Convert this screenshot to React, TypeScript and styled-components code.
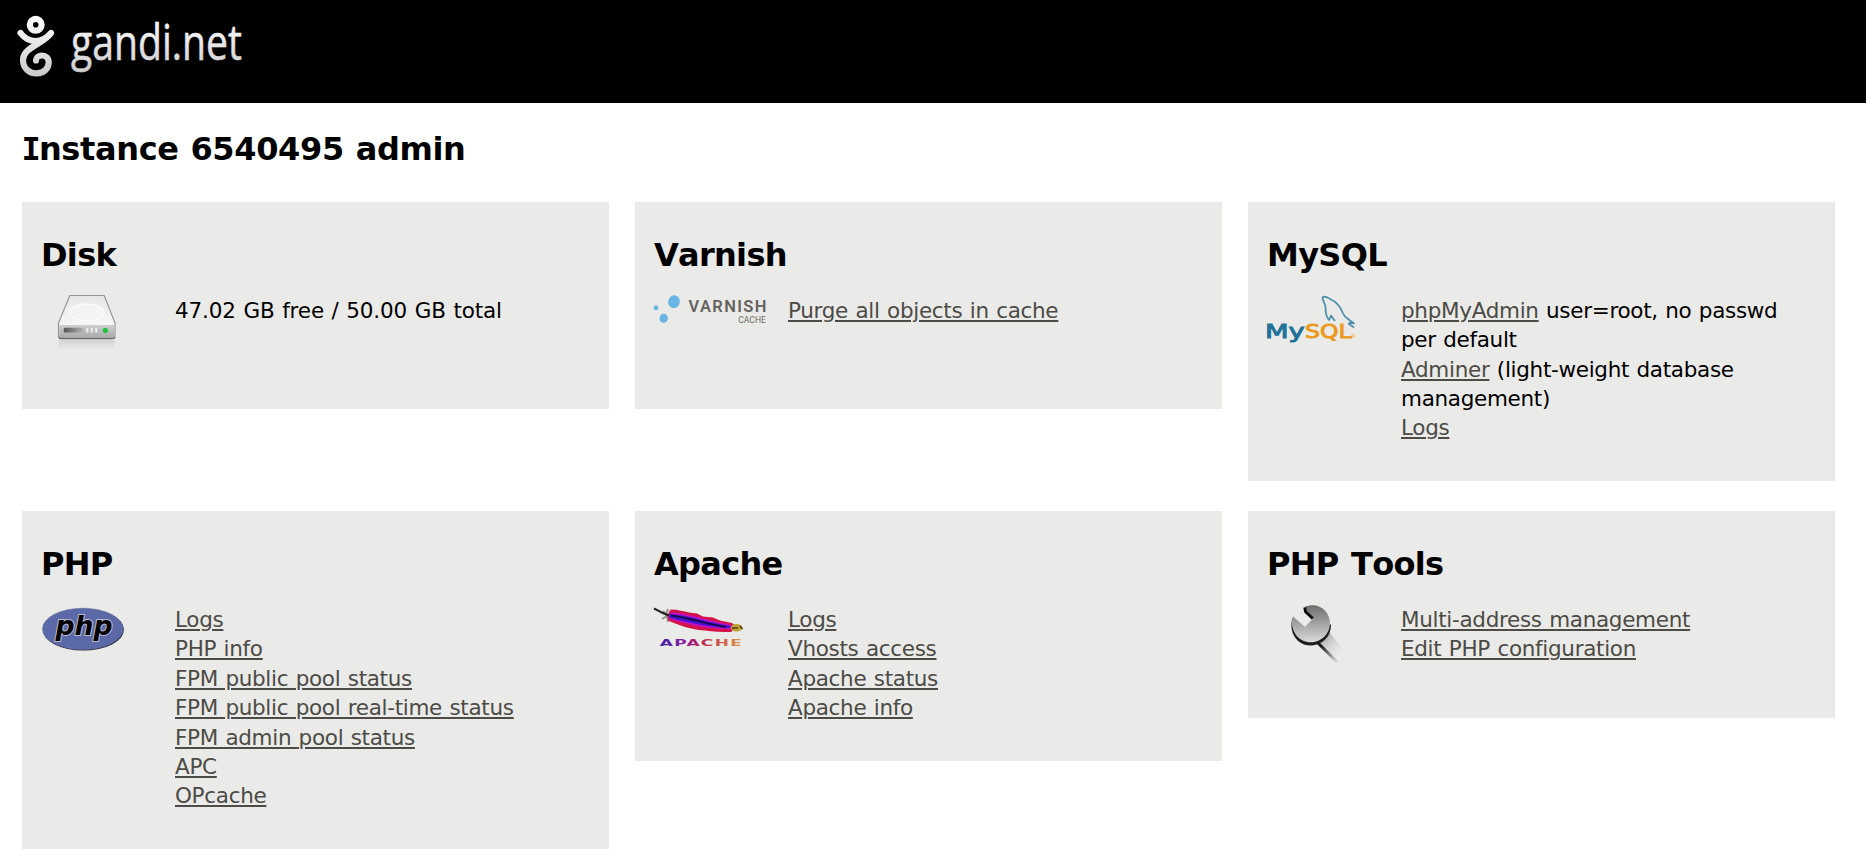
import React from 'react';
import styled, { createGlobalStyle } from 'styled-components';

const GlobalStyle = createGlobalStyle`
  body {
    margin: 0;
    background: #fff;
    color: #000;
    font-family: Verdana, "DejaVu Sans", sans-serif;
    font-size: 21.5px;
    line-height: 29.37px;
  }
`;

const Header = styled.header`
  height: 103px;
  background: #000;
`;

const Logo = styled.svg`
  display: block;
`;

const PageTitle = styled.h1`
  margin: 0;
  padding: 26px 23px 33px;
  font-size: 32px;
  line-height: 40px;
  letter-spacing: -0.35px;
  word-spacing: 1px;
`;

const SlabLetter = styled.span`
  font-family: "DejaVu Sans Mono", monospace;
  margin: 0 -1.5px;
`;

const Grid = styled.main`
  display: grid;
  grid-template-columns: repeat(3, 587px);
  column-gap: 26px;
  row-gap: 30px;
  align-items: start;
  padding: 0 22px 16px;
`;

const Card = styled.section`
  box-sizing: border-box;
  min-height: 207px;
  padding: 33px 19px 38.4px;
  background: #eaeae8;
`;

const CardTitle = styled.h2`
  margin: 0 0 20.9px;
  font-size: 32px;
  line-height: 40px;
  letter-spacing: -0.7px;
  word-spacing: 2px;
  font-kerning: none;
`;

const CardBody = styled.div`
  display: flex;
`;

const Icon = styled.svg`
  flex: none;
  width: 134px;
  height: 70px;
  margin: -4px 0 -30px;
  overflow: visible;
`;

const List = styled.ul<{ $tracking?: string }>`
  margin: 0;
  padding: 0;
  list-style: none;
  white-space: nowrap;
  word-spacing: 0.9px;
  letter-spacing: ${(p) => p.$tracking ?? '-0.31px'};
`;

const Link = styled.a`
  color: #4c4b45;
  text-decoration: underline;
  text-decoration-thickness: 2px;
  text-underline-offset: 2px;
`;

const DiskIcon = () => (
  <Icon viewBox="41 292 134 70">
    <defs>
      <linearGradient id="dTop" x1="0" y1="0" x2="0" y2="1">
        <stop offset="0" stopColor="#e6e6e6" /><stop offset="1" stopColor="#fff" />
      </linearGradient>
      <linearGradient id="dFront" x1="0" y1="0" x2="0" y2="1">
        <stop offset="0" stopColor="#cfcfcf" /><stop offset="1" stopColor="#a8a8a8" />
      </linearGradient>
      <linearGradient id="dSlot"><stop offset="0" stopColor="#555" /><stop offset="1" stopColor="#b5b5b5" /></linearGradient>
      <linearGradient id="dRef" x1="0" y1="0" x2="0" y2="1">
        <stop offset="0" stopColor="#c4c4c4" /><stop offset="1" stopColor="#eaeae8" />
      </linearGradient>
    </defs>
    <path d="M58.5 340H115V350H58.5Z" fill="url(#dRef)" opacity=".6" />
    <path d="M69.8 295.5H104.2L115 323V336Q115 338.5 112.5 338.5H61Q58.5 338.5 58.5 336V323Z" fill="url(#dTop)" stroke="#969696" strokeWidth="1.2" />
    <path d="M59.2 325H114.4V336Q114.4 338 112.5 338H61Q59.2 338 59.2 336Z" fill="url(#dFront)" />
    <path d="M59 337Q59.5 338.7 61 338.7H112.5Q114.5 338.7 114.7 337" fill="none" stroke="#686868" strokeWidth="1.3" />
    <ellipse cx="86.7" cy="312.3" rx="17.5" ry="8.5" fill="#f4f4f4" stroke="#fff" strokeWidth="1" />
    <rect x="63.7" y="327.7" width="20" height="4.8" rx="1.5" fill="url(#dSlot)" />
    <path d="M87.3 328V332.5M91.8 328V332.5M96.3 328V332.5" stroke="#eee" strokeWidth="2" />
    <circle cx="105.3" cy="330.3" r="2.6" fill="#1fc43c" />
  </Icon>
);

const VarnishIcon = () => (
  <Icon viewBox="654 292 134 70">
    <g fill="#69b5e3">
      <ellipse cx="674" cy="301.7" rx="5.8" ry="6.4" transform="rotate(15 674 301.7)" />
      <ellipse cx="656" cy="307.7" rx="2.3" ry="2.5" />
      <ellipse cx="663.7" cy="318.3" rx="4.2" ry="4.5" />
    </g>
    <text x="688.5" y="311.8" fontFamily="Roboto, sans-serif" fontSize="16.5" fontWeight="600" fill="#65625f" textLength="78" lengthAdjust="spacing">VARNISH</text>
    <text x="738.3" y="323.3" fontFamily="Roboto, sans-serif" fontSize="8.8" fill="#6d6b69" textLength="27.5" lengthAdjust="spacingAndGlyphs">CACHE</text>
  </Icon>
);

const MySQLIcon = () => (
  <Icon viewBox="1267 292 134 70">
    <g fontFamily="DejaVu Sans, sans-serif" fontSize="19" strokeWidth="0.9">
      <text x="1265" y="338.3" fill="#1f7399" stroke="#1f7399" textLength="39.8" lengthAdjust="spacingAndGlyphs">My</text>
      <text x="1305" y="338.3" fill="#ec9a1c" stroke="#ec9a1c" textLength="46.5" lengthAdjust="spacingAndGlyphs">SQL</text>
    </g>
    <circle cx="1353.3" cy="335.8" r="1.5" fill="none" stroke="#efb35c" />
    <path d="M1322.5 297C1325 295.5 1327.5 297.5 1331 299.5C1338 302.5 1341 308 1343 313.5C1344.5 317 1347 318 1350 320.5L1354 323.5C1351 322.5 1348.5 322.5 1349 324L1354 327.5M1322.5 297C1322.5 301 1325 303 1325.5 307C1325.5 312 1326 317 1329 320L1331 315.5L1335 321" fill="none" stroke="#4a8eab" strokeWidth="1.7" strokeLinejoin="round" />
  </Icon>
);

const PhpIcon = () => (
  <Icon viewBox="41 601 134 70">
    <ellipse cx="83.3" cy="629.6" rx="40.6" ry="21" fill="#20243d" />
    <ellipse cx="82.8" cy="628.9" rx="40.3" ry="20.7" fill="#5b69a8" stroke="#7079a3" strokeWidth="0.6" />
    <text x="55.5" y="634.5" fontFamily="DejaVu Sans, sans-serif" fontSize="26" fontWeight="700" fontStyle="italic" fill="#000" stroke="#b9bbcf" strokeWidth="2" paintOrder="stroke" textLength="57" lengthAdjust="spacingAndGlyphs">php</text>
  </Icon>
);

const ApacheIcon = () => (
  <Icon viewBox="654 601 134 70">
    <defs>
      <linearGradient id="aText" gradientUnits="userSpaceOnUse" x1="660" y1="0" x2="742" y2="0">
        <stop offset="0" stopColor="#3b22a8" /><stop offset=".3" stopColor="#8a1fa0" /><stop offset=".5" stopColor="#bd1f50" /><stop offset="1" stopColor="#dc9a4c" />
      </linearGradient>
    </defs>
    <path d="M663 611L666 614.5L668 609M662 619L667 616L668 622" fill="none" stroke="#8f9489" strokeWidth="2" />
    <path d="M671 609.5C678 609.5 684 611.5 689 612.5L697 613.5L703 616.5L713 617.5L720 620.5L732 623L737 627L731 632C721 632 713 631.5 705 630.5C696 630 690 628 685 627C678 624.5 672 622.5 668 620.5C667 615 669 611 671 609.5Z" fill="#d3124a" />
    <path d="M670 612.5C686 612.5 706 620 733 625.5L730 629.5C706 629 686 624 668.5 618.5Z" fill="#c40fc4" />
    <path d="M669.5 614C688 615 708 622.5 731 626L729 628C706 627 686 622 669 617.5Z" fill="#4513d6" />
    <path d="M671 615.5C690 618 708 624.5 726 627" fill="none" stroke="#140b48" strokeWidth="1.8" />
    <path d="M654 608.3C658 610.5 662 613.5 669 615.5" fill="none" stroke="#1b1e1b" strokeWidth="2" />
    <ellipse cx="736.5" cy="627.8" rx="5.8" ry="3.7" fill="#c3a034" />
    <path d="M732 628H738M740 626L742.5 629" stroke="#4b3b14" strokeWidth="1.5" />
    <text x="659.7" y="645.8" fontFamily="DejaVu Sans, sans-serif" fontSize="9" fontWeight="700" fill="url(#aText)" textLength="83.5" lengthAdjust="spacingAndGlyphs" letterSpacing="0.7">APACHE</text>
  </Icon>
);

const WrenchIcon = () => (
  <Icon viewBox="1267 601 134 70">
    <defs>
      <linearGradient id="wHead" x1="0" y1="0" x2="0" y2="1"><stop offset="0" stopColor="#6d6d6d" /><stop offset="1" stopColor="#dadada" /></linearGradient>
      <linearGradient id="wArm" gradientUnits="userSpaceOnUse" x1="1322" y1="646" x2="1338" y2="663"><stop offset="0" stopColor="#1a1a1a" /><stop offset="1" stopColor="#333" stopOpacity="0" /></linearGradient>
      <linearGradient id="wShine" gradientUnits="userSpaceOnUse" x1="1325" y1="638" x2="1343" y2="659"><stop offset="0" stopColor="#b4b4b4" /><stop offset="1" stopColor="#f2f2f2" stopOpacity="0" /></linearGradient>
    </defs>
    <path d="M1329 632L1349 656L1340 663L1318 642Z" fill="url(#wShine)" />
    <path d="M1317 642L1338 663" stroke="url(#wArm)" strokeWidth="3" />
    <path d="M1292.5 618C1288 633 1298 646 1311 645.5C1322 645 1331 637 1331 625L1328 622L1300 630Z" fill="#1d1d1d" />
    <path d="M1293 616.5L1305 627L1313 618.5L1304.3 607C1318 601 1330 611 1330 623C1330 635 1320 642.3 1311 642.3C1299 642.3 1291 632 1292 620Z" fill="url(#wHead)" />
    <path d="M1304.8 607.5L1305.5 611.5L1312.7 618.5" fill="none" stroke="#0b0b0b" strokeWidth="3" />
  </Icon>
);

const LinkItems = ({ items }: { items: string[] }) => (
  <List>
    {items.map((label) => (
      <li key={label}><Link>{label}</Link></li>
    ))}
  </List>
);

const App = () => (
  <>
    <GlobalStyle />
    <Header>
      <Logo width="340" height="103" viewBox="0 0 340 103">
        <defs>
          <linearGradient id="silver" gradientUnits="userSpaceOnUse" x1="0" y1="16" x2="0" y2="76">
            <stop offset="0" stopColor="#fff" /><stop offset="1" stopColor="#cacaca" />
          </linearGradient>
        </defs>
        <circle cx="35.7" cy="24.8" r="5.9" fill="none" stroke="url(#silver)" strokeWidth="6.2" />
        <path d="M20.5 33C25 39 30 41 35.5 41C41 41 46 39 51 33C44 44 23 47 23 60C23 68 29 73.3 36.5 73.3C44 73.3 48.7 68.5 48.7 62.5C48.7 58 45.5 55.5 42 55.5C38.5 55.5 36 57.5 36 60.5" fill="none" stroke="url(#silver)" strokeWidth="6.2" strokeLinecap="round" strokeLinejoin="round" />
        <text x="71" y="60" fontFamily="Open Sans, sans-serif" fontSize="50" fontWeight="500" fill="url(#silver)" stroke="url(#silver)" strokeWidth="0.5" textLength="171" lengthAdjust="spacingAndGlyphs">gandi.net</text>
      </Logo>
    </Header>
    <PageTitle><SlabLetter>I</SlabLetter>nstance 6540495 admin</PageTitle>
    <Grid>
      <Card>
        <CardTitle>Disk</CardTitle>
        <CardBody>
          <DiskIcon />
          <List $tracking="-0.14px"><li>47.02 GB free / 50.00 GB total</li></List>
        </CardBody>
      </Card>
      <Card>
        <CardTitle>Varnish</CardTitle>
        <CardBody>
          <VarnishIcon />
          <LinkItems items={['Purge all objects in cache']} />
        </CardBody>
      </Card>
      <Card>
        <CardTitle>MySQL</CardTitle>
        <CardBody>
          <MySQLIcon />
          <List>
            <li><Link>phpMyAdmin</Link> user=root, no passwd<br />per default</li>
            <li><Link>Adminer</Link> (light-weight database<br />management)</li>
            <li><Link>Logs</Link></li>
          </List>
        </CardBody>
      </Card>
      <Card>
        <CardTitle>PHP</CardTitle>
        <CardBody>
          <PhpIcon />
          <LinkItems items={['Logs', 'PHP info', 'FPM public pool status', 'FPM public pool real-time status', 'FPM admin pool status', 'APC', 'OPcache']} />
        </CardBody>
      </Card>
      <Card>
        <CardTitle>Apache</CardTitle>
        <CardBody>
          <ApacheIcon />
          <LinkItems items={['Logs', 'Vhosts access', 'Apache status', 'Apache info']} />
        </CardBody>
      </Card>
      <Card>
        <CardTitle>PHP Tools</CardTitle>
        <CardBody>
          <WrenchIcon />
          <LinkItems items={['Multi-address management', 'Edit PHP configuration']} />
        </CardBody>
      </Card>
    </Grid>
  </>
);

export default App;
